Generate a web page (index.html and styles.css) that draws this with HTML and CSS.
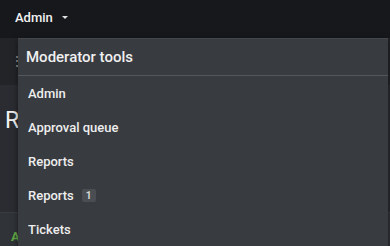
FILE: index.html
```html
<!DOCTYPE html>
<html lang="en">
<head>
  <meta charset="UTF-8">
  <meta name="viewport" content="width=device-width, initial-scale=1.0">
  <title>Moderator tools</title>
  <link rel="stylesheet" href="styles.css">
</head>
<body>
  <div class="topbar">
    <span class="nav-link">Admin</span>
    <span class="caret"></span>
  </div>

  <div class="page">
    <div class="toolbar">
      <span class="kebab">&#8942;</span>
    </div>
    <div class="title-block">
      <h1>R</h1>
    </div>
    <div class="footer-row">
      <span class="green">A</span>
    </div>
  </div>

  <div class="menu">
    <div class="menu-header">Moderator tools</div>
    <a class="menu-item">Admin</a>
    <a class="menu-item">Approval queue</a>
    <a class="menu-item">Reports</a>
    <a class="menu-item">Reports <span class="badge">1</span></a>
    <a class="menu-item">Tickets</a>
  </div>
</body>
</html>
```

FILE: styles.css
```css
body {
  margin: 0;
  font-family: Roboto, "Liberation Sans", Arial, sans-serif;
  background-color: #303338;
  color: #e6e7e8;
  height: 246px;
  overflow: hidden;
  position: relative;
}
.topbar {
  height: 38px;
  background-color: #17181c;
  display: flex;
  align-items: center;
  padding-left: 15px;
  box-sizing: border-box;
}
.nav-link {
  font-size: 13px;
  font-weight: 500;
  color: #f2f2f2;
  margin-top: -3px;
}
.caret {
  margin-left: 9px;
  margin-top: -3px;
  border-left: 3px solid transparent;
  border-right: 3px solid transparent;
  border-top: 3px solid #e0e0e0;
}
.toolbar {
  height: 47px;
  background-color: #222428;
}
.kebab {
  display: block;
  padding: 15px 0 0 10px;
  font-size: 14px;
  color: #9a9ca0;
}
.title-block {
  height: 127px;
  background-color: #2a2c31;
}
.title-block h1 {
  margin: 0;
  padding: 22px 0 0 5px;
  font-size: 23px;
  font-weight: 400;
  color: #f2f2f2;
}
.footer-row {
  height: 40px;
  border-top: 1px solid #3a3c41;
}
.green {
  display: block;
  padding: 16px 0 0 11px;
  font-size: 13px;
  font-weight: 700;
  color: #62a845;
}
.menu {
  position: absolute;
  top: 38px;
  left: 18px;
  width: 370px;
  height: 220px;
  background-color: #383b40;
  border-top: 1px solid #44474c;
  box-shadow: 0 2px 6px rgba(0, 0, 0, 0.5);
  box-sizing: border-box;
}
.menu-header {
  height: 36px;
  display: flex;
  align-items: center;
  padding-left: 8px;
  font-size: 15px;
  font-weight: 500;
  color: #f0f0f0;
  border-bottom: 1px solid #53565b;
}
.menu-item {
  display: flex;
  align-items: center;
  height: 34px;
  padding-left: 10px;
  font-size: 13px;
  font-weight: 500;
  color: #eeeeee;
}
.badge {
  margin-left: 8px;
  background-color: #4a4d52;
  color: #d8d8d8;
  font-size: 10px;
  font-weight: 700;
  padding: 1px 4px;
  border-radius: 2px;
}
```
